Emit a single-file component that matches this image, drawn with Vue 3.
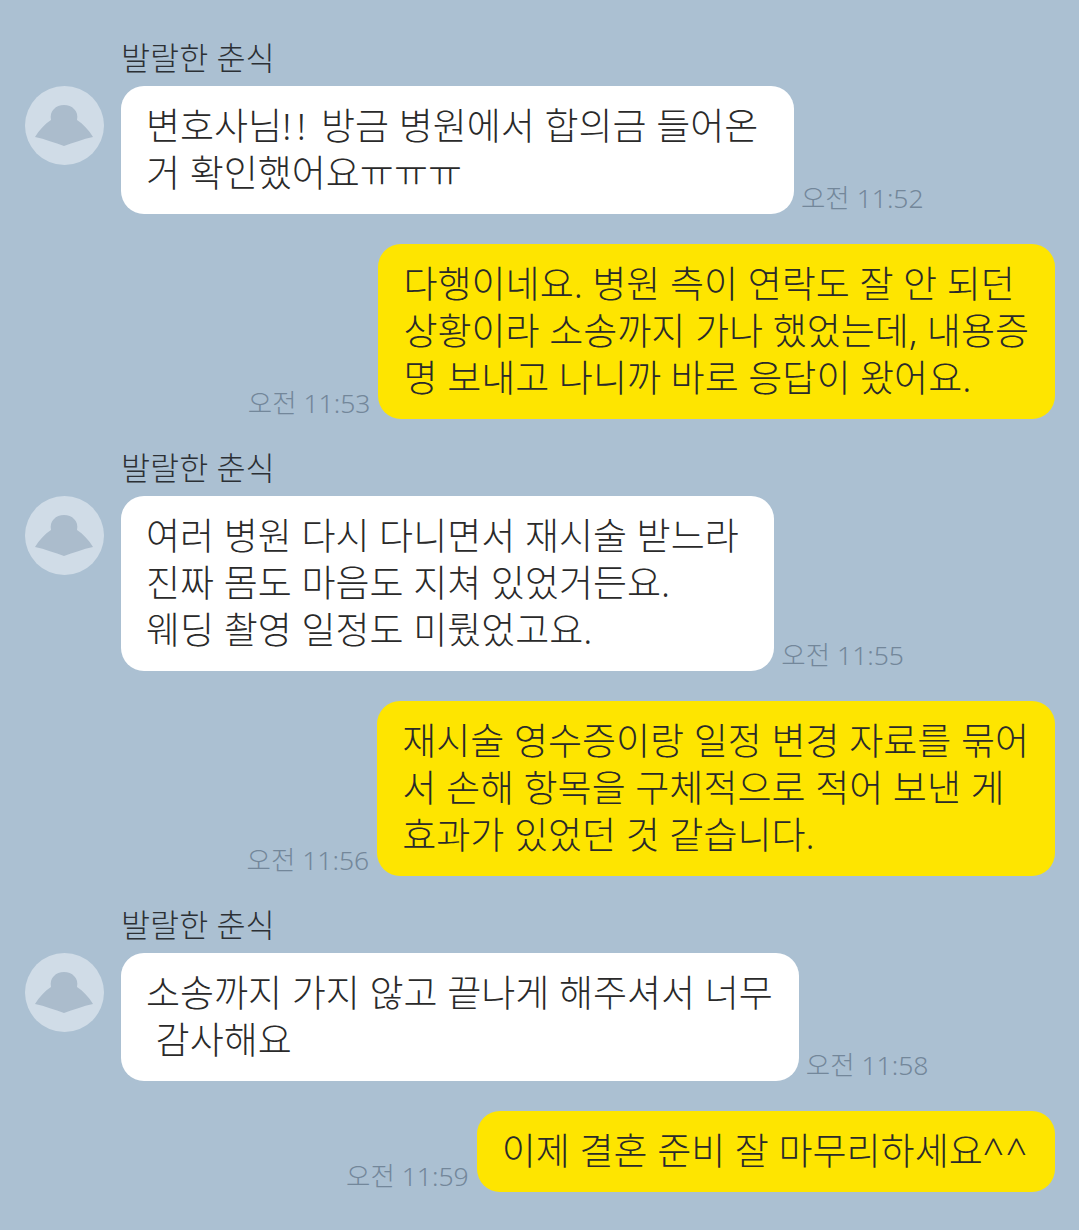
<script setup>
const name = '발랄한 춘식'
const rows = [
  { me: false, name, lines: ['변호사님!! 방금 병원에서 합의금 들어온 ', '거 확인했어요ㅠㅠㅠ'], time: '오전 11:52' },
  { me: true, lines: ['다행이네요. 병원 측이 연락도 잘 안 되던', '상황이라 소송까지 가나 했었는데, 내용증', '명 보내고 나니까 바로 응답이 왔어요.'], time: '오전 11:53' },
  { me: false, name, lines: ['여러 병원 다시 다니면서 재시술 받느라 ', '진짜 몸도 마음도 지쳐 있었거든요.', '웨딩 촬영 일정도 미뤘었고요.'], time: '오전 11:55' },
  { me: true, lines: ['재시술 영수증이랑 일정 변경 자료를 묶어', '서 손해 항목을 구체적으로 적어 보낸 게', '효과가 있었던 것 같습니다.'], time: '오전 11:56' },
  { me: false, name, lines: ['소송까지 가지 않고 끝나게 해주셔서 너무', ' 감사해요'], time: '오전 11:58' },
  { me: true, lines: ['이제 결혼 준비 잘 마무리하세요^^'], time: '오전 11:59' },
]
const parts = (l) => l.split(/(!!|\^\^)/).filter(Boolean)
const cls = (p) => (p === '!!' ? 'bang' : p === '^^' ? 'caret' : '')
</script>

<template>
  <div class="chat">
    <div v-for="(r, i) in rows" :key="i" class="row" :class="r.me ? 'me' : 'other'">
      <template v-if="r.me">
        <span class="time">{{ r.time }}</span>
        <div class="bubble yellow">
          <div v-for="l in r.lines" :key="l"><span v-for="(p, j) in parts(l)" :key="j" :class="cls(p)">{{ p }}</span></div>
        </div>
      </template>
      <template v-else>
        <div class="avatar">
          <svg width="79" height="79" viewBox="0 0 79 79">
            <circle cx="39.5" cy="39.5" r="39.5" fill="#d0dce7" />
            <path d="M10 51 C14 44 20 38 26 34 C24 25 31 19 39 19 C47 19 54 25 52 34 C58 38 64 44 68 51 C58 53 48 57 39 60 C30 57 20 53 10 51 Z" fill="#abbccc" />
          </svg>
        </div>
        <div class="body">
          <div class="name">{{ r.name }}</div>
          <div class="line">
            <div class="bubble white">
              <div v-for="l in r.lines" :key="l"><span v-for="(p, j) in parts(l)" :key="j" :class="cls(p)">{{ p }}</span></div>
            </div>
            <span class="time">{{ r.time }}</span>
          </div>
        </div>
      </template>
    </div>
  </div>
</template>

<style>
html, body { margin: 0; background: #abc0d2; }
</style>

<style scoped>
.chat {
  width: 1079px;
  height: 1230px;
  box-sizing: border-box;
  padding: 39px 24px 0 25px;
  background: #abc0d2;
  display: flex;
  flex-direction: column;
  gap: 30px;
  font-family: "Noto Sans", "Noto Sans CJK KR", sans-serif;
  font-weight: 300;
  overflow: hidden;
}
.row { display: flex; }
.row.me { justify-content: flex-end; align-items: flex-end; }
.avatar { width: 79px; height: 79px; margin-top: 47px; margin-right: 17px; flex: none; }
.name { font-size: 31.6px; line-height: 38px; height: 38px; color: #2c3035; margin-bottom: 9px; }
.line { display: flex; align-items: flex-end; }
.bubble {
  border-radius: 23px;
  padding: 16px 26px 18px 25px;
  font-size: 37px;
  line-height: 47px;
  color: #2a2a2a;
  white-space: pre;
  box-sizing: border-box;
}
.bang { letter-spacing: 5.5px; }
.caret { letter-spacing: 2px; }
.white { background: #fff; }
.yellow { background: #fee500; }
.time { font-size: 26.5px; line-height: 32px; color: #73879a; white-space: nowrap; }
.line .time { margin-left: 7px; }
.me .time { margin-right: 8px; }
</style>
